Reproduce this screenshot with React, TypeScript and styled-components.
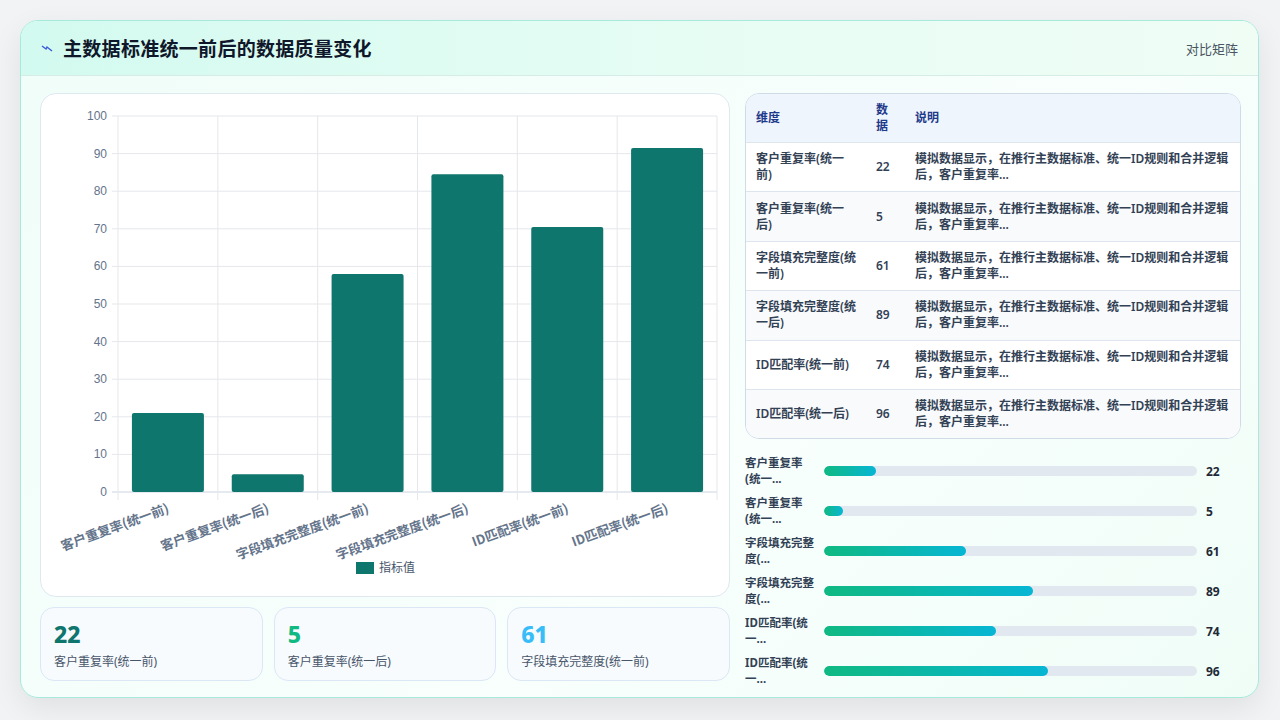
import React from "react";
import styled, { createGlobalStyle } from "styled-components";

const G = createGlobalStyle`
  body{margin:0;background:#f1f3f4;font-family:"Noto Sans","Noto Sans CJK SC",sans-serif;}
  *{box-sizing:border-box;}
`;
const Page = styled.div`width:1280px;height:720px;padding:20px 21px 22px 20px;overflow:hidden;`;
const Card = styled.div`
  height:678px;border:1px solid #a7eadb;border-radius:18px;overflow:hidden;
  background:linear-gradient(135deg,#f0fdf8,#f8fffd 60%,#f0fdf7);
  box-shadow:0 10px 30px rgba(0,0,0,.08);display:flex;flex-direction:column;
`;
const Header = styled.div`
  height:55px;flex:none;display:flex;align-items:center;justify-content:space-between;
  padding:0 20px 0 20px;background:linear-gradient(90deg,#d3faf0,#e8fdf4 60%,#effdf5);
  border-bottom:1px solid #d6ece6;
`;
const Title = styled.h1`margin:0;font-size:19px;font-weight:700;color:#0f172a;display:flex;align-items:center;gap:10px;letter-spacing:.3px;`;
const Tag = styled.span`font-size:13px;color:#4b5563;`;
const Body = styled.div`flex:1;display:grid;grid-template-columns:690px 496px;gap:15px;padding:17px 18px 0 19px;min-height:0;`;
const Left = styled.div`display:flex;flex-direction:column;gap:10px;`;
const ChartCard = styled.div`height:504px;flex:none;background:#fff;border:1px solid #dfe7ef;border-radius:16px;`;
const Stats = styled.div`display:grid;grid-template-columns:repeat(3,1fr);gap:11px;`;
const Stat = styled.div`height:74px;border:1px solid #dbe7f5;border-radius:14px;background:#f8fbfe;padding:12px 13px;`;
const StatNum = styled.div<{c:string}>`font-size:23px;font-weight:800;color:${p=>p.c};line-height:28px;`;
const StatLabel = styled.div`font-size:12px;color:#475569;margin-top:4px;`;
const Right = styled.div`display:flex;flex-direction:column;overflow:hidden;min-height:0;`;
const Table = styled.div`flex:none;border:1px solid #cfdbe6;border-radius:14px;overflow:hidden;background:#fff;`;
const Row = styled.div<{h?:boolean;alt?:boolean}>`
  display:grid;grid-template-columns:120px 39px 1fr;align-items:center;
  height:${p=>p.h?48:49.4}px;padding:0 10px;font-size:12px;line-height:16px;font-weight:${p=>p.h?700:600};
  color:${p=>p.h?"#1e3a8a":"#334155"};
  background:${p=>p.h?"#eef5fd":p.alt?"#f8fafc":"transparent"};
  border-top:${p=>p.h?"none":"1px solid #dde5ee"};
  & > span:first-child{padding-right:18px;}
`;
const Bars = styled.div`flex:none;display:flex;flex-direction:column;margin-top:12px;`;
const BarRow = styled.div`display:grid;grid-template-columns:79px 373px 40px;align-items:center;height:40px;`;
const BarLabel = styled.div`font-size:11.5px;font-weight:700;color:#334155;line-height:16px;white-space:pre;`;
const Track = styled.div`height:10px;border-radius:5px;background:#e2e8f0;overflow:hidden;`;
const Fill = styled.div`height:100%;border-radius:5px;background:linear-gradient(90deg,#10b981,#06b6d4);`;
const BarVal = styled.div`font-size:12px;font-weight:700;color:#1f2937;padding-left:9px;`;
const Pills = styled.div`flex:none;display:flex;gap:10px;margin-top:12px;`;
const Pill = styled.div<{w:number}>`width:${p=>p.w}px;height:26px;border:1px solid #e3e8ee;border-radius:14px;background:#fff;flex:none;`;

const data = [
  ["客户重复率(统一前)", 22, 21], ["客户重复率(统一后)", 5, 4.7], ["字段填充完整度(统一前)", 61, 58],
  ["字段填充完整度(统一后)", 89, 84.5], ["ID匹配率(统一前)", 74, 70.5], ["ID匹配率(统一后)", 96, 91.5],
] as const;
const barLabels = ["客户重复率\n(统一...", "客户重复率\n(统一...", "字段填充完整\n度(...", "字段填充完整\n度(...", "ID匹配率(统\n一...", "ID匹配率(统\n一..."];
const desc = "模拟数据显示，在推行主数据标准、统一ID规则和合并逻辑后，客户重复率...";
const dims = ["客户重复率(统一前)", "客户重复率(统一后)", "字段填充完整度(统一前)", "字段填充完整度(统一后)", "ID匹配率(统一前)", "ID匹配率(统一后)"];

function Chart() {
  const x0 = 77, x1 = 676, y0 = 22, y1 = 398, w = (x1 - x0) / 6;
  const yv = (v: number) => y1 - (v / 100) * (y1 - y0);
  return (
    <svg width="690" height="504" style={{ display: "block" }}>
      {Array.from({ length: 11 }, (_, i) => i * 10).map(v => (
        <g key={v}>
          <line x1={x0 - 6} x2={x1} y1={yv(v)} y2={yv(v)} stroke={v === 0 ? "#cbd5e1" : "#e5e7eb"} />
          <text x={x0 - 11} y={yv(v) + 4} textAnchor="end" fontSize="12" fill="#64748b" fontFamily="Liberation Sans, sans-serif">{v}</text>
        </g>
      ))}
      {Array.from({ length: 7 }, (_, i) => (
        <line key={i} x1={x0 + i * w} x2={x0 + i * w} y1={y0} y2={y1 + 8} stroke="#e5e7eb" />
      ))}
      {data.map(([l, , v], i) => {
        const cx = x0 + w * i + w / 2;
        return (
          <g key={i}>
            <rect x={cx - 36} y={yv(v)} width={72} height={y1 - yv(v)} rx={2} fill="#0f766e" />
            <text transform={`translate(${cx + 2},${y1 + 20}) rotate(-20)`} textAnchor="end" fontSize="13" fontWeight="600" fill="#64748b" fontFamily="Noto Sans CJK SC, sans-serif">{l}</text>
          </g>
        );
      })}
      <rect x={315} y={468} width={18} height={12} fill="#0f766e" />
      <text x={338} y={478} fontSize="12" fill="#475569" fontFamily="Noto Sans CJK SC, sans-serif">指标值</text>
    </svg>
  );
}

export default function App() {
  return (
    <Page>
      <G />
      <Card>
        <Header>
          <Title>
            <svg width="12" height="8" viewBox="0 0 12 8"><path d="M1 2 L5 5 L6 3 L11 7" stroke="#3b5bdb" strokeWidth="1.4" fill="none" /></svg>
            主数据标准统一前后的数据质量变化
          </Title>
          <Tag>对比矩阵</Tag>
        </Header>
        <Body>
          <Left>
            <ChartCard><Chart /></ChartCard>
            <Stats>
              <Stat><StatNum c="#0f766e">22</StatNum><StatLabel>客户重复率(统一前)</StatLabel></Stat>
              <Stat><StatNum c="#10b981">5</StatNum><StatLabel>客户重复率(统一后)</StatLabel></Stat>
              <Stat><StatNum c="#38bdf8">61</StatNum><StatLabel>字段填充完整度(统一前)</StatLabel></Stat>
            </Stats>
          </Left>
          <Right>
            <Table>
              <Row h><span>维度</span><span>数<br />据</span><span>说明</span></Row>
              {data.map(([, n], i) => (
                <Row key={i} alt={i % 2 === 1}><span>{dims[i]}</span><span>{n}</span><span>{desc}</span></Row>
              ))}
            </Table>
            <Bars>
              {data.map(([, n], i) => (
                <BarRow key={i}>
                  <BarLabel>{barLabels[i]}</BarLabel>
                  <Track><Fill style={{ width: `${[14, 5, 38, 56, 46, 60][i]}%` }} /></Track>
                  <BarVal>{n}</BarVal>
                </BarRow>
              ))}
            </Bars>
            <Pills><Pill w={72} /><Pill w={52} /><Pill w={54} /><Pill w={70} /></Pills>
          </Right>
        </Body>
      </Card>
    </Page>
  );
}
